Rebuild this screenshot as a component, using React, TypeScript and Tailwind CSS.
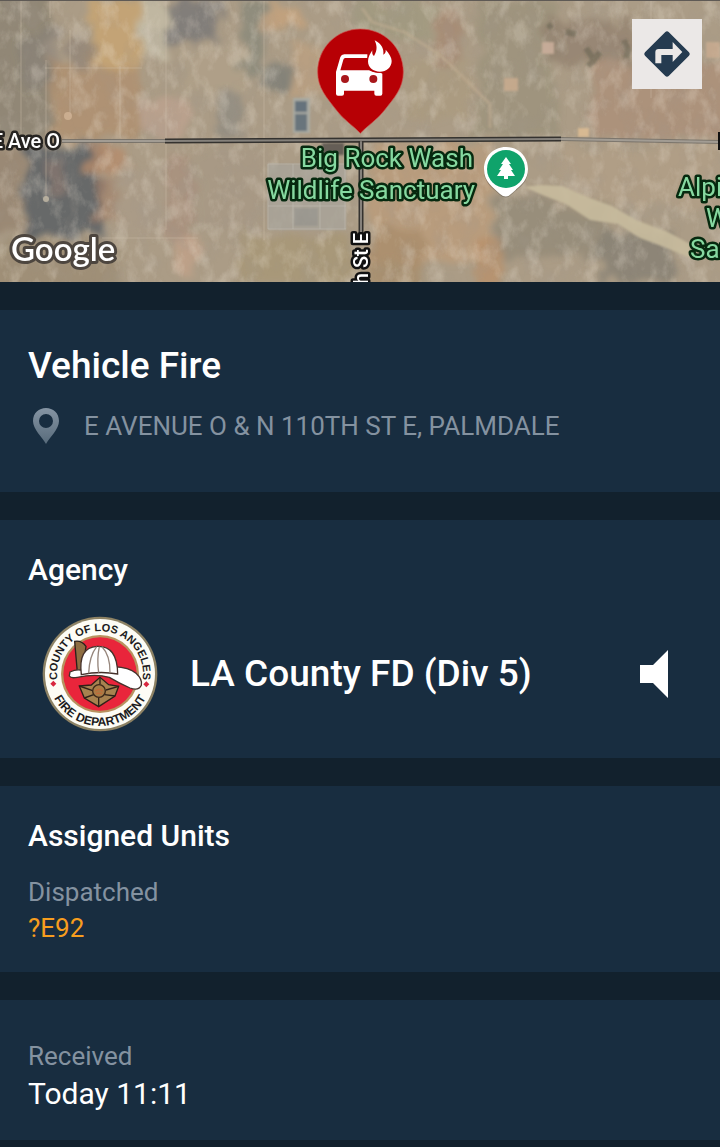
import React from 'react';

interface SectionProps {
  label: string;
  className?: string;
  children: React.ReactNode;
}

interface Patch {
  x: number;
  y: number;
  w: number;
  h: number;
  color: string;
  opacity: number;
}

const terrain: Patch[] = [
  { x: -10, y: -10, w: 60, h: 150, color: '#8b8272', opacity: 0.8 },
  { x: 20, y: 30, w: 40, h: 60, color: '#857f7a', opacity: 0.5 },
  { x: 50, y: 62, w: 90, h: 76, color: '#b08f6c', opacity: 0.7 },
  { x: 88, y: 0, w: 54, h: 66, color: '#c9a572', opacity: 0.8 },
  { x: 68, y: 38, w: 26, h: 30, color: '#8f8175', opacity: 0.7 },
  { x: 140, y: 0, w: 28, h: 60, color: '#c2baa4', opacity: 0.9 },
  { x: 168, y: 0, w: 50, h: 42, color: '#7f7c78', opacity: 0.95 },
  { x: 186, y: 44, w: 60, h: 50, color: '#b0a189', opacity: 0.7 },
  { x: 140, y: 98, w: 50, h: 40, color: '#bda38e', opacity: 0.8 },
  { x: 218, y: 90, w: 24, h: 46, color: '#908c81', opacity: 0.8 },
  { x: 24, y: 144, w: 78, h: 92, color: '#636567', opacity: 0.95 },
  { x: 48, y: 160, w: 18, h: 36, color: '#8f7c70', opacity: 0.6 },
  { x: -10, y: 144, w: 32, h: 90, color: '#968470', opacity: 0.8 },
  { x: 88, y: 146, w: 38, h: 24, color: '#b58c6b', opacity: 0.8 },
  { x: 98, y: 178, w: 22, h: 44, color: '#a48067', opacity: 0.7 },
  { x: 118, y: 165, w: 50, h: 72, color: '#aa9b87', opacity: 0.7 },
  { x: 168, y: 150, w: 26, h: 90, color: '#a88a77', opacity: 0.5 },
  { x: 196, y: 146, w: 70, h: 90, color: '#a79984', opacity: 0.7 },
  { x: -10, y: 242, w: 130, h: 50, color: '#9a8a70', opacity: 0.7 },
  { x: 172, y: 238, w: 26, h: 34, color: '#c4a389', opacity: 0.7 },
  { x: 242, y: 0, w: 20, h: 74, color: '#898a7a', opacity: 0.8 },
  { x: 264, y: 4, w: 40, h: 24, color: '#c6a27c', opacity: 0.8 },
  { x: 262, y: 66, w: 28, h: 24, color: '#7c7d77', opacity: 0.8 },
  { x: 290, y: 44, w: 34, h: 50, color: '#bea180', opacity: 0.7 },
  { x: 352, y: 0, w: 80, h: 40, color: '#a09a80', opacity: 0.8 },
  { x: 410, y: 60, w: 60, h: 60, color: '#ab9b80', opacity: 0.8 },
  { x: 436, y: 6, w: 24, h: 60, color: '#a5876f', opacity: 0.7 },
  { x: 478, y: 0, w: 80, h: 136, color: '#9d937d', opacity: 0.9 },
  { x: 545, y: 20, w: 90, h: 44, color: '#948270', opacity: 0.8 },
  { x: 590, y: 62, w: 140, h: 76, color: '#ac917a', opacity: 0.9 },
  { x: 370, y: 144, w: 120, h: 120, color: '#bb9c7a', opacity: 0.8 },
  { x: 372, y: 228, w: 50, h: 60, color: '#a68b6a', opacity: 0.7 },
  { x: 496, y: 196, w: 110, h: 60, color: '#948b78', opacity: 0.8 },
  { x: 478, y: 238, w: 22, h: 50, color: '#b9916b', opacity: 0.8 },
  { x: 600, y: 234, w: 70, h: 48, color: '#8a8376', opacity: 0.9 },
  { x: 560, y: 146, w: 160, h: 60, color: '#b09e86', opacity: 0.9 },
  { x: 240, y: 236, w: 110, h: 50, color: '#a89776', opacity: 0.8 },
];

// Bright parcels and bare pads that stand out from the desert floor
const parcels: Patch[] = [
  { x: 542, y: 42, w: 12, h: 12, color: '#c9ad9a', opacity: 0.9 },
  { x: 504, y: 78, w: 14, h: 13, color: '#c8ab8e', opacity: 0.9 },
  { x: 578, y: 128, w: 11, h: 9, color: '#dcbd94', opacity: 0.9 },
  { x: 706, y: 42, w: 14, h: 16, color: '#cfae92', opacity: 0.7 },
  { x: 293, y: 98, w: 17, h: 35, color: '#a9aaa3', opacity: 1 },
  { x: 295, y: 101, w: 12, h: 11, color: '#65727b', opacity: 1 },
  { x: 295, y: 114, w: 12, h: 17, color: '#69757c', opacity: 1 },
  { x: 268, y: 164, w: 78, h: 66, color: '#a8a59c', opacity: 0.7 },
  { x: 294, y: 208, w: 24, h: 18, color: '#8b8c88', opacity: 0.5 },
  { x: 322, y: 143, w: 22, h: 12, color: '#5c5852', opacity: 0.9 },
];

const mapLabel = {
  fontFamily: 'Roboto, sans-serif',
  strokeLinejoin: 'round',
  paintOrder: 'stroke',
} as const;

function Patches({ items }: { items: Patch[] }) {
  return (
    <>
      {items.map((p) => (
        <rect
          key={`${p.x}-${p.y}`}
          x={p.x}
          y={p.y}
          width={p.w}
          height={p.h}
          fill={p.color}
          opacity={p.opacity}
        />
      ))}
    </>
  );
}

function IncidentPin() {
  return (
    <svg x="317" y="28" width="87" height="106" viewBox="231 84 261 318">
      <path
        d="M361 400C340 377 310 359 289 330C260 292 233 265 233 216C233 143 290 87 361 87C433 87 490 143 490 216C490 265 462 294 434 330C412 359 382 377 361 400Z"
        fill="#b70005"
        stroke="#cf5550"
        strokeWidth="2"
      />
      <path
        d="M288 216L301 171Q304 163 313 163H382V174H316Q311 174 310 179L301 211H387Q400 220 422 218L427 221V281Q427 287 421 287H409Q403 287 403 281V272H312V281Q312 287 306 287H294Q288 287 288 281Z"
        fill="#fff"
      />
      <circle cx="315" cy="237" r="12" fill="#a8171b" />
      <circle cx="400" cy="237" r="12" fill="#a8171b" />
      <path
        d="M404 121C426 132 432 148 430 164C436 160 438 155 437 149C447 160 455 172 455 183C455 202 439 215 420 215C399 215 384 202 384 184C384 171 391 160 397 151C396 159 397 165 402 168C413 151 411 136 404 121Z"
        fill="#fff"
        stroke="#b70005"
        strokeWidth="7"
        paintOrder="stroke"
      />
    </svg>
  );
}

function ParkMarker() {
  return (
    <g>
      <path
        d="M506 148C519 148 528 158 528 170C528 184 518 188 511 195Q506 200 500 195C493 188 484 184 484 170C484 158 493 148 506 148Z"
        fill="#4a4439"
        opacity="0.4"
      />
      <path
        d="M506 147C519 147 528 157 528 169C528 182 518 187 511 194Q506 199 500 194C493 187 484 182 484 169C484 157 493 147 506 147Z"
        fill="#fff"
      />
      <circle cx="506" cy="169" r="19" fill="#0fa36b" />
      <path
        d="M506 157L511 164H509L513 170H511L515 176H508V179H504V176H497L501 170H499L503 164H501Z"
        fill="#fff"
      />
    </g>
  );
}

function SatelliteMap() {
  return (
    <svg
      className="block h-full w-full"
      viewBox="0 0 720 282"
      preserveAspectRatio="xMidYMid slice"
      role="img"
      aria-label="Satellite map of the incident"
    >
      <defs>
        <filter id="terrain" x="-5%" y="-5%" width="110%" height="110%">
          <feTurbulence type="fractalNoise" baseFrequency="0.05" numOctaves="4" seed="5" result="warp" />
          <feDisplacementMap in="SourceGraphic" in2="warp" scale="26" xChannelSelector="R" yChannelSelector="G" />
          <feGaussianBlur stdDeviation="3" />
        </filter>
        <filter id="soften">
          <feGaussianBlur stdDeviation="1" />
        </filter>
        <filter id="shadows" x="0" y="0" width="100%" height="100%">
          <feTurbulence type="fractalNoise" baseFrequency="0.05 0.035" numOctaves="6" seed="8" />
          <feColorMatrix values="0 0 0 0 0.36  0 0 0 0 0.32  0 0 0 0 0.28  3 0 0 0 -1.4" />
        </filter>
        <filter id="highlights" x="0" y="0" width="100%" height="100%">
          <feTurbulence type="fractalNoise" baseFrequency="0.07 0.045" numOctaves="5" seed="23" />
          <feColorMatrix values="0 0 0 0 0.85  0 0 0 0 0.78  0 0 0 0 0.67  0 3 0 0 -1.4" />
        </filter>
      </defs>

      <rect width="720" height="282" fill="#ab9c86" />
      <g filter="url(#terrain)">
        <Patches items={terrain} />
      </g>
      <rect width="720" height="282" filter="url(#shadows)" opacity="0.2" />
      <rect width="720" height="282" filter="url(#highlights)" opacity="0.25" />
      <g filter="url(#soften)">
        <Patches items={parcels} />
        <path
          d="M524 187L540 185L562 186L590 198L612 206L636 220L668 232L690 244L690 258L664 247L640 238L618 224L590 220L566 204L545 196Z"
          fill="#c8bb9d"
          opacity="0.9"
        />
        <path d="M362 8L372 22L404 32L440 55L462 76L490 104L490 128" fill="none" stroke="#beac91" strokeWidth="3" opacity="0.6" />
        <path d="M566 32L576 34M586 48L594 60L600 52M588 62L592 66M624 40L628 50L626 58M548 28L552 24" fill="none" stroke="#5f5d4c" strokeWidth="6" opacity="0.5" />
      </g>
      <path
        d="M21 0V138M46 60V198M70 30V116M50 0V18M120 66V138M166 0V230M651 0V98M264 0V240M45 68H142M102 238H198"
        fill="none"
        stroke="#d5c6ae"
        opacity="0.4"
      />
      <path
        d="M268 164H346M268 186H346M268 206H346M268 229H346M293 164V229M320 164V229M345 164V229M268 164V229"
        fill="none"
        stroke="#c4c2b8"
        opacity="0.5"
      />
      <circle cx="68" cy="116" r="4" fill="#d1b496" opacity="0.8" />
      <circle cx="46" cy="199" r="3" fill="#c5bba8" opacity="0.8" />
      <rect width="720" height="1" fill="#5f5a55" />

      {/* Roads */}
      <path d="M62 141H166M561 139L720 142" fill="none" stroke="#6e6a64" strokeWidth="4" opacity="0.8" />
      <path d="M62 141H166M561 139L720 142" fill="none" stroke="#a29c93" strokeWidth="2" />
      <path d="M165 141L561 139M361 141V236" fill="none" stroke="#34322f" strokeWidth="5" />
      <path d="M165 141L561 139M361 141V236" fill="none" stroke="#85817b" strokeWidth="2" />

      {/* Labels */}
      <g style={mapLabel} fill="#fff" stroke="#262421" strokeWidth="5" fontSize="20" fontWeight="500">
        <text x="60" y="148" textAnchor="end">E Ave O</text>
        <text transform="translate(368 233) rotate(-90)" textAnchor="end" stroke="#111">
          110th St E
        </text>
      </g>
      <g style={mapLabel} fill="#86d9a0" stroke="#06290f" strokeWidth="5" fontSize="26">
        <text x="473" y="167" textAnchor="end">Big Rock Wash</text>
        <text x="475" y="199" textAnchor="end">Wildlife Sanctuary</text>
        <text x="678" y="196">Alpine</text>
        <text x="706" y="227">Wildlife</text>
        <text x="690" y="258">Sanctuary</text>
      </g>
      <path d="M718 132H720V150H718Z" fill="#111" />
      <text
        x="11"
        y="261"
        fontSize="33"
        fontWeight="600"
        fill="#fff"
        stroke="#4d463f"
        strokeWidth="6"
        strokeLinejoin="round"
        paintOrder="stroke"
        style={{ fontFamily: 'Lato, sans-serif' }}
      >
        Google
      </text>

      <ParkMarker />
      <IncidentPin />
    </svg>
  );
}

function DirectionsIcon() {
  return (
    <svg className="size-12" viewBox="0 0 144 144" aria-hidden="true">
      <path
        d="M67 6Q72 1 77 6L138 67Q143 72 138 77L77 138Q72 143 67 138L6 77Q1 72 6 67Z"
        fill="#253b50"
      />
      <path d="M37 100V67Q37 57 47 57H89V36L118 66L89 96V75H55V100Z" fill="#ebe8e7" />
    </svg>
  );
}

function LocationIcon() {
  return (
    <svg className="h-9 w-7 shrink-0" viewBox="0 0 28 36" aria-hidden="true">
      <defs>
        <linearGradient id="pin-shade" x1="0" y1="0" x2="0" y2="1">
          <stop offset="0" stopColor="#8594a3" />
          <stop offset="1" stopColor="#586b7b" />
        </linearGradient>
      </defs>
      <path
        d="M14 0C21 0 27 5 27 13C27 21 18 29 14 36C10 29 1 21 1 13C1 5 7 0 14 0ZM14 6A7 7 0 1 0 14 20A7 7 0 1 0 14 6Z"
        fill="url(#pin-shade)"
        fillRule="evenodd"
      />
    </svg>
  );
}

function SpeakerIcon() {
  return (
    <svg className="h-12 w-7" viewBox="0 0 28 48" aria-hidden="true">
      <path d="M0 15H13L28 0V48L13 33H0Z" fill="#fff" />
    </svg>
  );
}

function AgencySeal() {
  return (
    <svg
      className="size-[116px] shrink-0"
      viewBox="0 0 348 348"
      role="img"
      aria-label="County of Los Angeles Fire Department seal"
    >
      <defs>
        <path id="seal-top" d="M48 202A129 129 0 1 1 300 202" />
        <path id="seal-bottom" d="M24 214A155 155 0 0 0 324 214" />
      </defs>
      <circle cx="174" cy="174" r="172" fill="#8d8264" />
      <circle cx="174" cy="174" r="165" fill="#fdfcf5" />
      <circle cx="174" cy="174" r="117" fill="#b8925f" />
      <circle cx="174" cy="174" r="110" fill="#e9253b" />
      <g
        fill="#1c1b20"
        fontWeight="700"
        textAnchor="middle"
        style={{ fontFamily: '"Liberation Sans", Arial, sans-serif' }}
      >
        <text fontSize="33">
          <textPath href="#seal-top" startOffset="50%">COUNTY OF LOS ANGELES</textPath>
        </text>
        <text fontSize="36">
          <textPath href="#seal-bottom" startOffset="50%">FIRE DEPARTMENT</textPath>
        </text>
      </g>
      <path d="M34 194L43 203L34 212L25 203ZM313 196L322 205L313 214L304 205Z" fill="#d8273f" />
      <path d="M98 76Q118 72 132 91L119 180H107Z" fill="#8e6e42" stroke="#2a211b" strokeWidth="4" />
      <path
        d="M84 168Q100 160 115 162L216 152Q262 154 282 172Q302 190 298 208Q290 226 264 216Q232 202 202 184Q160 172 106 184Q86 188 82 180Z"
        fill="#fff"
        stroke="#45312b"
        strokeWidth="4"
      />
      <path
        d="M118 176Q108 94 165 91Q226 88 227 174Q174 164 118 176Z"
        fill="#fff"
        stroke="#45312b"
        strokeWidth="4"
      />
      <path
        d="M164 92Q142 120 140 172M172 92Q164 130 170 170M180 92Q205 118 204 170"
        fill="none"
        stroke="#96867c"
        strokeWidth="4"
      />
      <path
        d="M112 210L148 207L174 184L200 206L230 211L219 240L170 272L127 246Z"
        fill="#a7824f"
        stroke="#2f2118"
        strokeWidth="4"
      />
      <path
        d="M112 210L152 224M230 211L192 222M174 184V205M127 246L155 236M219 240L188 236M170 272V246"
        stroke="#2f2118"
        strokeWidth="4"
      />
      <circle cx="171" cy="225" r="19" fill="#a97b45" stroke="#3a2719" strokeWidth="4" />
      <path d="M160 226Q171 214 182 226M162 232H180" fill="none" stroke="#c26a38" strokeWidth="4" />
    </svg>
  );
}

function Section({ label, className = '', children }: SectionProps) {
  return (
    <section aria-label={label} className={`bg-[#182d40] px-7 pb-[26px] ${className}`}>
      {children}
    </section>
  );
}

export default function App() {
  return (
    <main className="flex min-h-screen flex-col gap-7 bg-[#12212d] pb-1.5 font-['Roboto',sans-serif] text-white">
      <div className="relative h-[282px] overflow-hidden">
        <SatelliteMap />
        <button
          type="button"
          aria-label="Directions"
          className="absolute top-[19px] right-[18px] flex size-[70px] items-center justify-center bg-[#ebe8e7]"
        >
          <DirectionsIcon />
        </button>
      </div>

      <Section label="Incident" className="pt-9">
        <h1 className="text-[37px] leading-10 font-medium">Vehicle Fire</h1>
        <div className="mt-5 mb-5 flex items-center gap-6 pl-1">
          <LocationIcon />
          <p className="text-[26px] leading-10 text-[#8492a0]">
            E AVENUE O &amp; N 110TH ST E, PALMDALE
          </p>
        </div>
      </Section>

      <Section label="Agency" className="pt-8">
        <h2 className="text-[30px] leading-9 font-medium">Agency</h2>
        <div className="mt-7 flex items-center pr-6 pl-3.5">
          <AgencySeal />
          <p className="ml-8 flex-1 text-[37px] leading-10 font-medium">LA County FD (Div 5)</p>
          <button type="button" aria-label="Listen to LA County FD (Div 5)">
            <SpeakerIcon />
          </button>
        </div>
      </Section>

      <Section label="Assigned units" className="pt-8">
        <h2 className="text-[30px] leading-9 font-medium">Assigned Units</h2>
        <dl className="mt-5 text-[26px] leading-9">
          <dt className="text-[#8492a0]">Dispatched</dt>
          <dd className="text-[#f79d1e]">?E92</dd>
        </dl>
      </Section>

      <Section label="Received" className="pt-[38px]">
        <dl>
          <dt className="text-[26px] leading-9 text-[#8492a0]">Received</dt>
          <dd className="text-[30px] leading-10">Today 11:11</dd>
        </dl>
      </Section>
    </main>
  );
}
